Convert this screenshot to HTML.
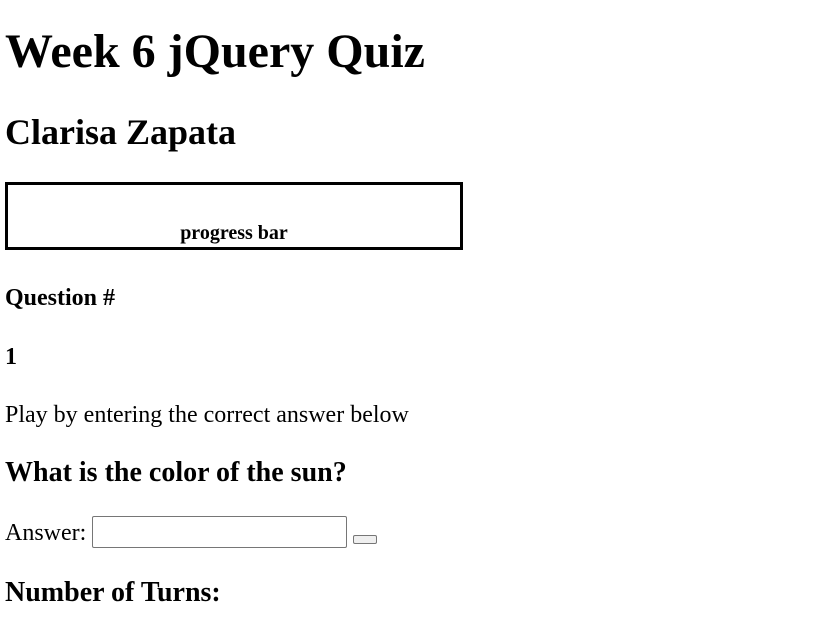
<!DOCTYPE html>
<html><head><style>
body{margin:0;background:#fff;font-family:"Liberation Serif",serif;color:#000;width:835px;height:639px;position:relative;overflow:hidden}
.t{position:absolute;left:5px;line-height:1;white-space:nowrap;margin:0}
.b{font-weight:bold}
</style></head><body>
<div class="t b" style="top:28px;font-size:48px">Week 6 jQuery Quiz</div>
<div class="t b" style="top:114px;font-size:36px">Clarisa Zapata</div>
<div style="position:absolute;left:5px;top:182px;width:452px;height:62px;border:3px solid #000"></div>
<div class="t b" style="top:223px;left:5px;width:458px;text-align:center;font-size:20px">progress bar</div>
<div class="t b" style="top:286px;font-size:24px">Question #</div>
<div class="t b" style="top:345px;font-size:24px">1</div>
<div class="t" style="top:403px;font-size:24px">Play by entering the correct answer below</div>
<div class="t b" style="top:459px;font-size:28px">What is the color of the sun?</div>
<div class="t" style="top:521px;font-size:24px">Answer:</div>
<div style="position:absolute;left:92px;top:516px;width:253px;height:30px;border:1px solid #767676;border-radius:2px"></div>
<div style="position:absolute;left:353px;top:535px;width:22px;height:7px;border:1px solid #767676;border-radius:2px;background:#efefef"></div>
<div class="t b" style="top:579px;font-size:28px">Number of Turns:</div>
</body></html>
